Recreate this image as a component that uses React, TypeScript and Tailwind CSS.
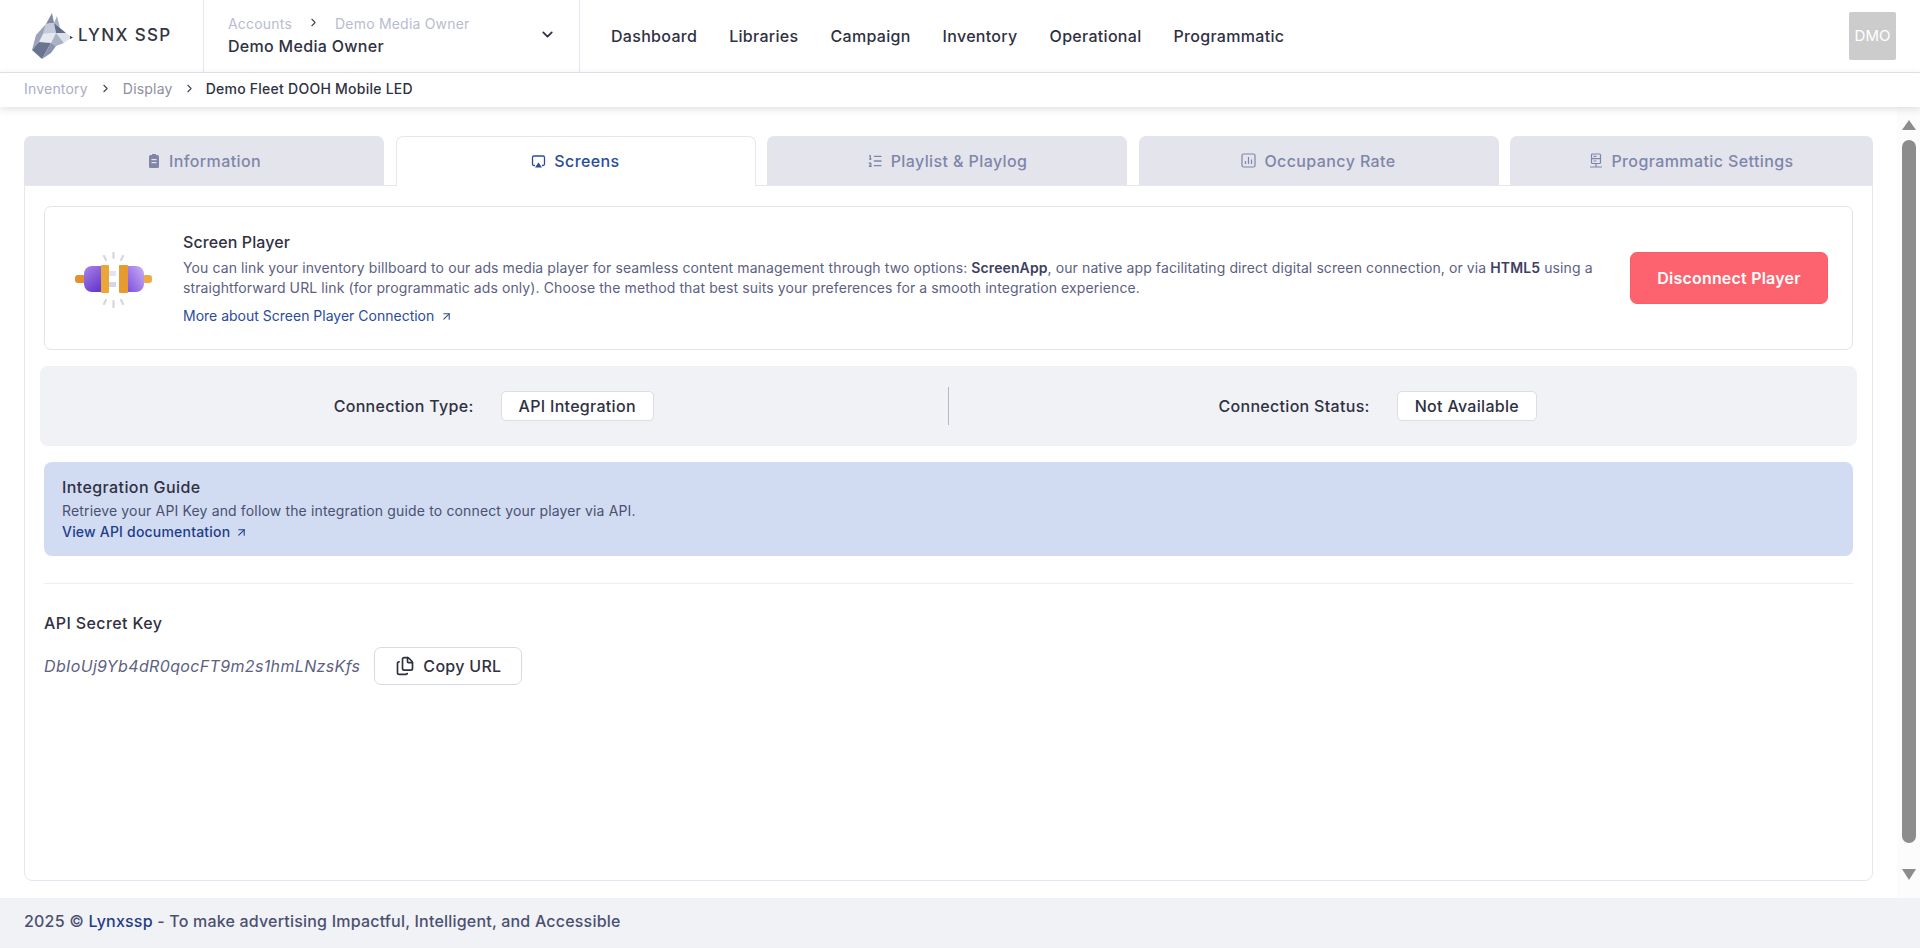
import { ArrowUpRight, ChevronDown, ChevronRight, Files, ListOrdered } from 'lucide-react';

// Low-poly lynx head used in the header logo
function LynxLogo() {
  return (
    <svg width="42" height="47" viewBox="0 0 42 47" className="shrink-0">
      <polygon points="21,0 23,10 15,11" fill="#7f89a4" />
      <polygon points="26,3 29,15 23,10" fill="#a9b1c6" />
      <polygon points="15,11 23,10 25,20 12,21" fill="#c5cbdb" />
      <polygon points="23,10 29,15 35,20 25,20" fill="#626c88" />
      <polygon points="25,20 35,20 41,24 33,30" fill="#dde1ea" />
      <polygon points="12,21 25,20 20,30 8,29" fill="#e6e9f0" />
      <polygon points="25,20 33,30 25,33 20,30" fill="#aab2c7" />
      <polygon points="15,11 12,21 8,29 1,37 5,22" fill="#9aa3bb" />
      <polygon points="8,29 20,30 11,46 1,37" fill="#69748f" />
      <polygon points="20,30 25,33 20,40 11,46" fill="#8a94ad" />
      <polygon points="39,23 42,24.5 39,26" fill="#33353f" />
    </svg>
  );
}

function ClipboardIcon() {
  return (
    <svg width="14" height="16" viewBox="0 0 14 16" fill="currentColor">
      <path d="M5 1h4v1h1.500A1.500 1.500 0 0 1 12 3.500v10a1.500 1.500 0 0 1-1.500 1.500h-7A1.500 1.500 0 0 1 2 13.500v-10A1.500 1.500 0 0 1 3.500 2H5z" />
      <rect x="4.500" y="6" width="5" height="1.200" fill="#e3e4ec" />
      <rect x="4.500" y="9" width="5" height="1.200" fill="#e3e4ec" />
    </svg>
  );
}

function ScreenIcon() {
  return (
    <svg width="15" height="15" viewBox="0 0 15 15">
      <path d="M4 11.500H3a1.500 1.500 0 0 1-1.500-1.500V3.500A1.500 1.500 0 0 1 3 2h9a1.500 1.500 0 0 1 1.500 1.500V10a1.500 1.500 0 0 1-1.500 1.500h-1" fill="none" stroke="currentColor" strokeWidth="1.300" />
      <path d="M7.500 8.500l3.500 5H4z" fill="currentColor" />
    </svg>
  );
}

function BarsIcon() {
  return (
    <svg width="15" height="15" viewBox="0 0 15 15" fill="none" stroke="currentColor" strokeWidth="1.200">
      <rect x="1" y="1" width="13" height="13" rx="1.500" />
      <path d="M4.500 11V8M7.500 11V4M10.500 11V6.500" />
    </svg>
  );
}

function ServerIcon() {
  return (
    <svg width="14" height="16" viewBox="0 0 14 16" fill="none" stroke="currentColor" strokeWidth="1.200">
      <rect x="2.500" y="1" width="9" height="9.500" rx="1" />
      <path d="M2.500 5.700h9M7 10.500v3M1 14h12" />
      <path d="M4.500 3.300h3M4.500 8h3" />
    </svg>
  );
}

function PlugIcon() {
  return (
    <svg width="78" height="56" viewBox="0 0 78 56" className="mt-[3px] shrink-0">
      <defs>
        <linearGradient id="plugLeft" x1="0" x2="0.6" y1="0" y2="1">
          <stop offset="0" stopColor="#a884ea" />
          <stop offset="1" stopColor="#6a3cce" />
        </linearGradient>
        <linearGradient id="plugRight" x1="0" x2="1" y1="1" y2="0">
          <stop offset="0" stopColor="#7d4edc" />
          <stop offset="1" stopColor="#cbb0f4" />
        </linearGradient>
      </defs>
      <rect x="0" y="23" width="11" height="8" rx="3" fill="#e2922d" />
      <rect x="67" y="23" width="10" height="8" rx="3" fill="#efaa3f" />
      <path d="M17 14h10v26H17a8 8 0 0 1-8-8V22a8 8 0 0 1 8-8z" fill="url(#plugLeft)" />
      <path d="M52 14h9a8 8 0 0 1 8 8v10a8 8 0 0 1-8 8h-9z" fill="url(#plugRight)" />
      <rect x="34" y="19" width="7" height="5" fill="#e6e3f0" />
      <rect x="34" y="30" width="7" height="5" fill="#d8d5e8" />
      <rect x="26" y="13" width="8" height="28" rx="1" fill="#eba63a" />
      <rect x="44" y="13" width="9" height="28" rx="1" fill="#e79a30" />
      <g stroke="#d5d7e1" strokeWidth="2.200" strokeLinecap="round">
        <path d="M38.500 1v5M29 4l2 4M48 4l-2 4M38.500 49v6M29 52l2-4M48 52l-2-4" />
      </g>
    </svg>
  );
}

const NAV = ['Dashboard', 'Libraries', 'Campaign', 'Inventory', 'Operational', 'Programmatic'];

export default function App() {
  return (
    <div className="flex h-[948px] flex-col overflow-hidden bg-white font-['Inter',sans-serif] text-[#2f3142]">
      {/* Top bar */}
      <header className="flex h-[73px] shrink-0 items-stretch border-b border-[#e5e6ef]">
        <div className="flex w-[204px] items-center gap-[5px] border-r border-[#e5e6ef] pl-[31px]">
          <LynxLogo />
          <span className="text-[17px] font-medium tracking-[0.08em] text-[#33353f]">LYNX SSP</span>
        </div>
        <div className="flex w-[376px] items-center justify-between border-r border-[#e5e6ef] pl-[24px] pr-[23px]">
          <div className="pb-[2px]">
            <div className="flex items-center text-[14px] leading-[20px] tracking-[0.2px] text-[#b9bcd0]">
              Accounts
              <ChevronRight size={13} strokeWidth={2} className="mx-[15px] -translate-y-px text-[#44465a]" />
              Demo Media Owner
            </div>
            <div className="mt-px text-[16px] font-medium leading-[22px] tracking-[0.3px]">Demo Media Owner</div>
          </div>
          <ChevronDown size={17} strokeWidth={2.500} className="-translate-y-[2px]" />
        </div>
        <nav className="flex flex-1 items-center gap-[32px] pl-[31px] text-[16px] font-medium tracking-[0.3px]">
          {NAV.map((item) => (
            <span key={item}>{item}</span>
          ))}
        </nav>
        <div className="flex items-center pr-[24px]">
          <div className="flex h-[48px] w-[47px] items-center justify-center rounded-[2px] bg-[#cccccc] text-[15px] text-white">
            DMO
          </div>
        </div>
      </header>

      {/* Breadcrumb */}
      <div className="z-10 flex h-[34px] shrink-0 items-center bg-white pb-[4px] pl-[24px] text-[14px] tracking-[0.2px] shadow-[0_2px_8px_rgba(50,55,90,0.16)]">
        <span className="text-[#a9adc6]">Inventory</span>
        <ChevronRight size={13} strokeWidth={2} className="mx-[11px] text-[#44465a]" />
        <span className="text-[#8d8f9c]">Display</span>
        <ChevronRight size={13} strokeWidth={2} className="mx-[10px] text-[#44465a]" />
        <span className="font-medium tracking-[0.25px]">Demo Fleet DOOH Mobile LED</span>
      </div>

      <div className="flex min-h-0 flex-1">
        <main className="flex min-w-0 flex-1 flex-col pb-[17px] pl-[24px] pt-[29px]">
          {/* Tabs */}
          <div className="grid h-[49px] shrink-0 grid-cols-[360px_360px_360px_360px_1fr] gap-x-[11.5px] text-[16px] font-medium tracking-[0.4px] text-[#7f86aa]">
            <div className="flex items-center justify-center gap-[8px] rounded-t-[7px] bg-[#e3e4ec]">
              <ClipboardIcon />
              Information
            </div>
            <div className="relative z-10 -mb-px flex items-center justify-center gap-[8px] rounded-t-[7px] border border-b-0 border-[#e5e6ef] bg-white pb-px text-[#2a4c9c]">
              <ScreenIcon />
              Screens
            </div>
            <div className="flex items-center justify-center gap-[8px] rounded-t-[7px] bg-[#e3e4ec]">
              <ListOrdered size={16} />
              Playlist &amp; Playlog
            </div>
            <div className="flex items-center justify-center gap-[8px] rounded-t-[7px] bg-[#e3e4ec]">
              <BarsIcon />
              Occupancy Rate
            </div>
            <div className="flex items-center justify-center gap-[8px] rounded-t-[7px] bg-[#e3e4ec]">
              <ServerIcon />
              Programmatic Settings
            </div>
          </div>

          <section className="flex min-h-0 flex-1 flex-col rounded-b-[8px] border border-[#e5e6ef] px-[19px] pt-[20px]">
            {/* Screen player */}
            <div className="flex h-[144px] shrink-0 items-center rounded-[7px] border border-[#e3e4ec] pl-[30px] pr-[24px]">
              <PlugIcon />
              <div className="ml-[30px] min-w-0 flex-1">
                <h3 className="text-[16px] font-medium leading-[24px] tracking-[0.1px]">Screen Player</h3>
                <p className="mt-[4px] text-[14px] leading-[20px] tracking-[0.1px] text-[#5d6180]">
                  You can link your inventory billboard to our ads media player for seamless content management through two options:{' '}
                  <b className="font-semibold text-[#3d4060]">ScreenApp</b>, our native app facilitating direct digital screen connection, or via{' '}
                  <b className="font-semibold text-[#3d4060]">HTML5</b> using a straightforward URL link (for programmatic ads only). Choose the method that best suits your preferences for a smooth integration experience.
                </p>
                <a className="mt-[8px] flex items-center gap-[6px] text-[14px] leading-[20px] text-[#2a4c9c]">
                  More about Screen Player Connection
                  <ArrowUpRight size={13} />
                </a>
              </div>
              <button className="ml-[30px] h-[52px] w-[198px] shrink-0 rounded-[7px] border border-[#fb5c66] bg-[#fc636e] text-[16px] font-semibold tracking-[0.2px] text-white">
                Disconnect Player
              </button>
            </div>

            {/* Connection info */}
            <div className="-mx-[4px] mt-[16px] grid h-[80px] shrink-0 grid-cols-2 items-center rounded-[8px] bg-[#f1f2f6] text-[16px] font-medium tracking-[0.3px]">
              <div className="flex items-center justify-center gap-[27px] border-r border-[#b4b8cc] py-[4px]">
                Connection Type:
                <span className="flex h-[30px] items-center rounded-[5px] border border-[#dcdde6] bg-white px-[17px]">API Integration</span>
              </div>
              <div className="flex items-center justify-center gap-[27px] py-[4px] pr-[50px]">
                Connection Status:
                <span className="flex h-[30px] items-center rounded-[5px] border border-[#dcdde6] bg-white px-[17px]">Not Available</span>
              </div>
            </div>

            {/* Guide */}
            <div className="mt-[16px] h-[94px] shrink-0 rounded-[8px] bg-[#d1dcf3] px-[18px] pt-[13px]">
              <h4 className="text-[16px] font-medium leading-[24px] tracking-[0.4px]">Integration Guide</h4>
              <p className="mt-[2px] text-[14px] leading-[20px] tracking-[0.15px] text-[#4b5070]">
                Retrieve your API Key and follow the integration guide to connect your player via API.
              </p>
              <a className="mt-px flex items-center gap-[5px] text-[14px] font-medium leading-[20px] tracking-[0.2px] text-[#1f3c88]">
                View API documentation
                <ArrowUpRight size={13} />
              </a>
            </div>

            <div className="mt-[27px] h-px shrink-0 bg-[#eceef2]" />

            {/* API key */}
            <h4 className="mt-[27px] text-[16px] font-medium leading-[24px] tracking-[0.4px]">API Secret Key</h4>
            <div className="mt-[12px] flex items-center gap-[14px]">
              <span className="text-[16px] italic tracking-[0.35px] text-[#5d6180]">DbIoUj9Yb4dR0qocFT9m2s1hmLNzsKfs</span>
              <button className="flex h-[38px] w-[148px] items-center justify-center gap-[8px] rounded-[7px] border border-[#d9dae2] bg-white text-[16px] font-medium tracking-[0.3px]">
                <Files size={20} />
                Copy URL
              </button>
            </div>
          </section>
        </main>

        {/* Page scrollbar */}
        <aside className="ml-[24px] flex w-[23px] shrink-0 flex-col items-center bg-[#fcfcfc] pb-[18px] pl-[5px] pr-[4px] pt-[13px]">
          <svg width="14" height="10" viewBox="0 0 14 10" className="shrink-0" fill="#8c8c8c">
            <path d="M7 0l7 10H0z" />
          </svg>
          <div className="mb-[26px] mt-[10px] w-[14px] flex-1 rounded-full bg-[#8c8c8c]" />
          <svg width="14" height="11" viewBox="0 0 14 11" className="shrink-0" fill="#8c8c8c">
            <path d="M7 11L0 0h14z" />
          </svg>
        </aside>
      </div>

      <footer className="flex h-[50px] shrink-0 items-center bg-[#f1f2f6] pb-[4px] pl-[24px] text-[16px] font-medium tracking-[0.2px] text-[#4b5070]">
        <span>
          2025 © <span className="text-[#1f3c88]">Lynxssp</span> - To make advertising Impactful, Intelligent, and Accessible
        </span>
      </footer>
    </div>
  );
}
